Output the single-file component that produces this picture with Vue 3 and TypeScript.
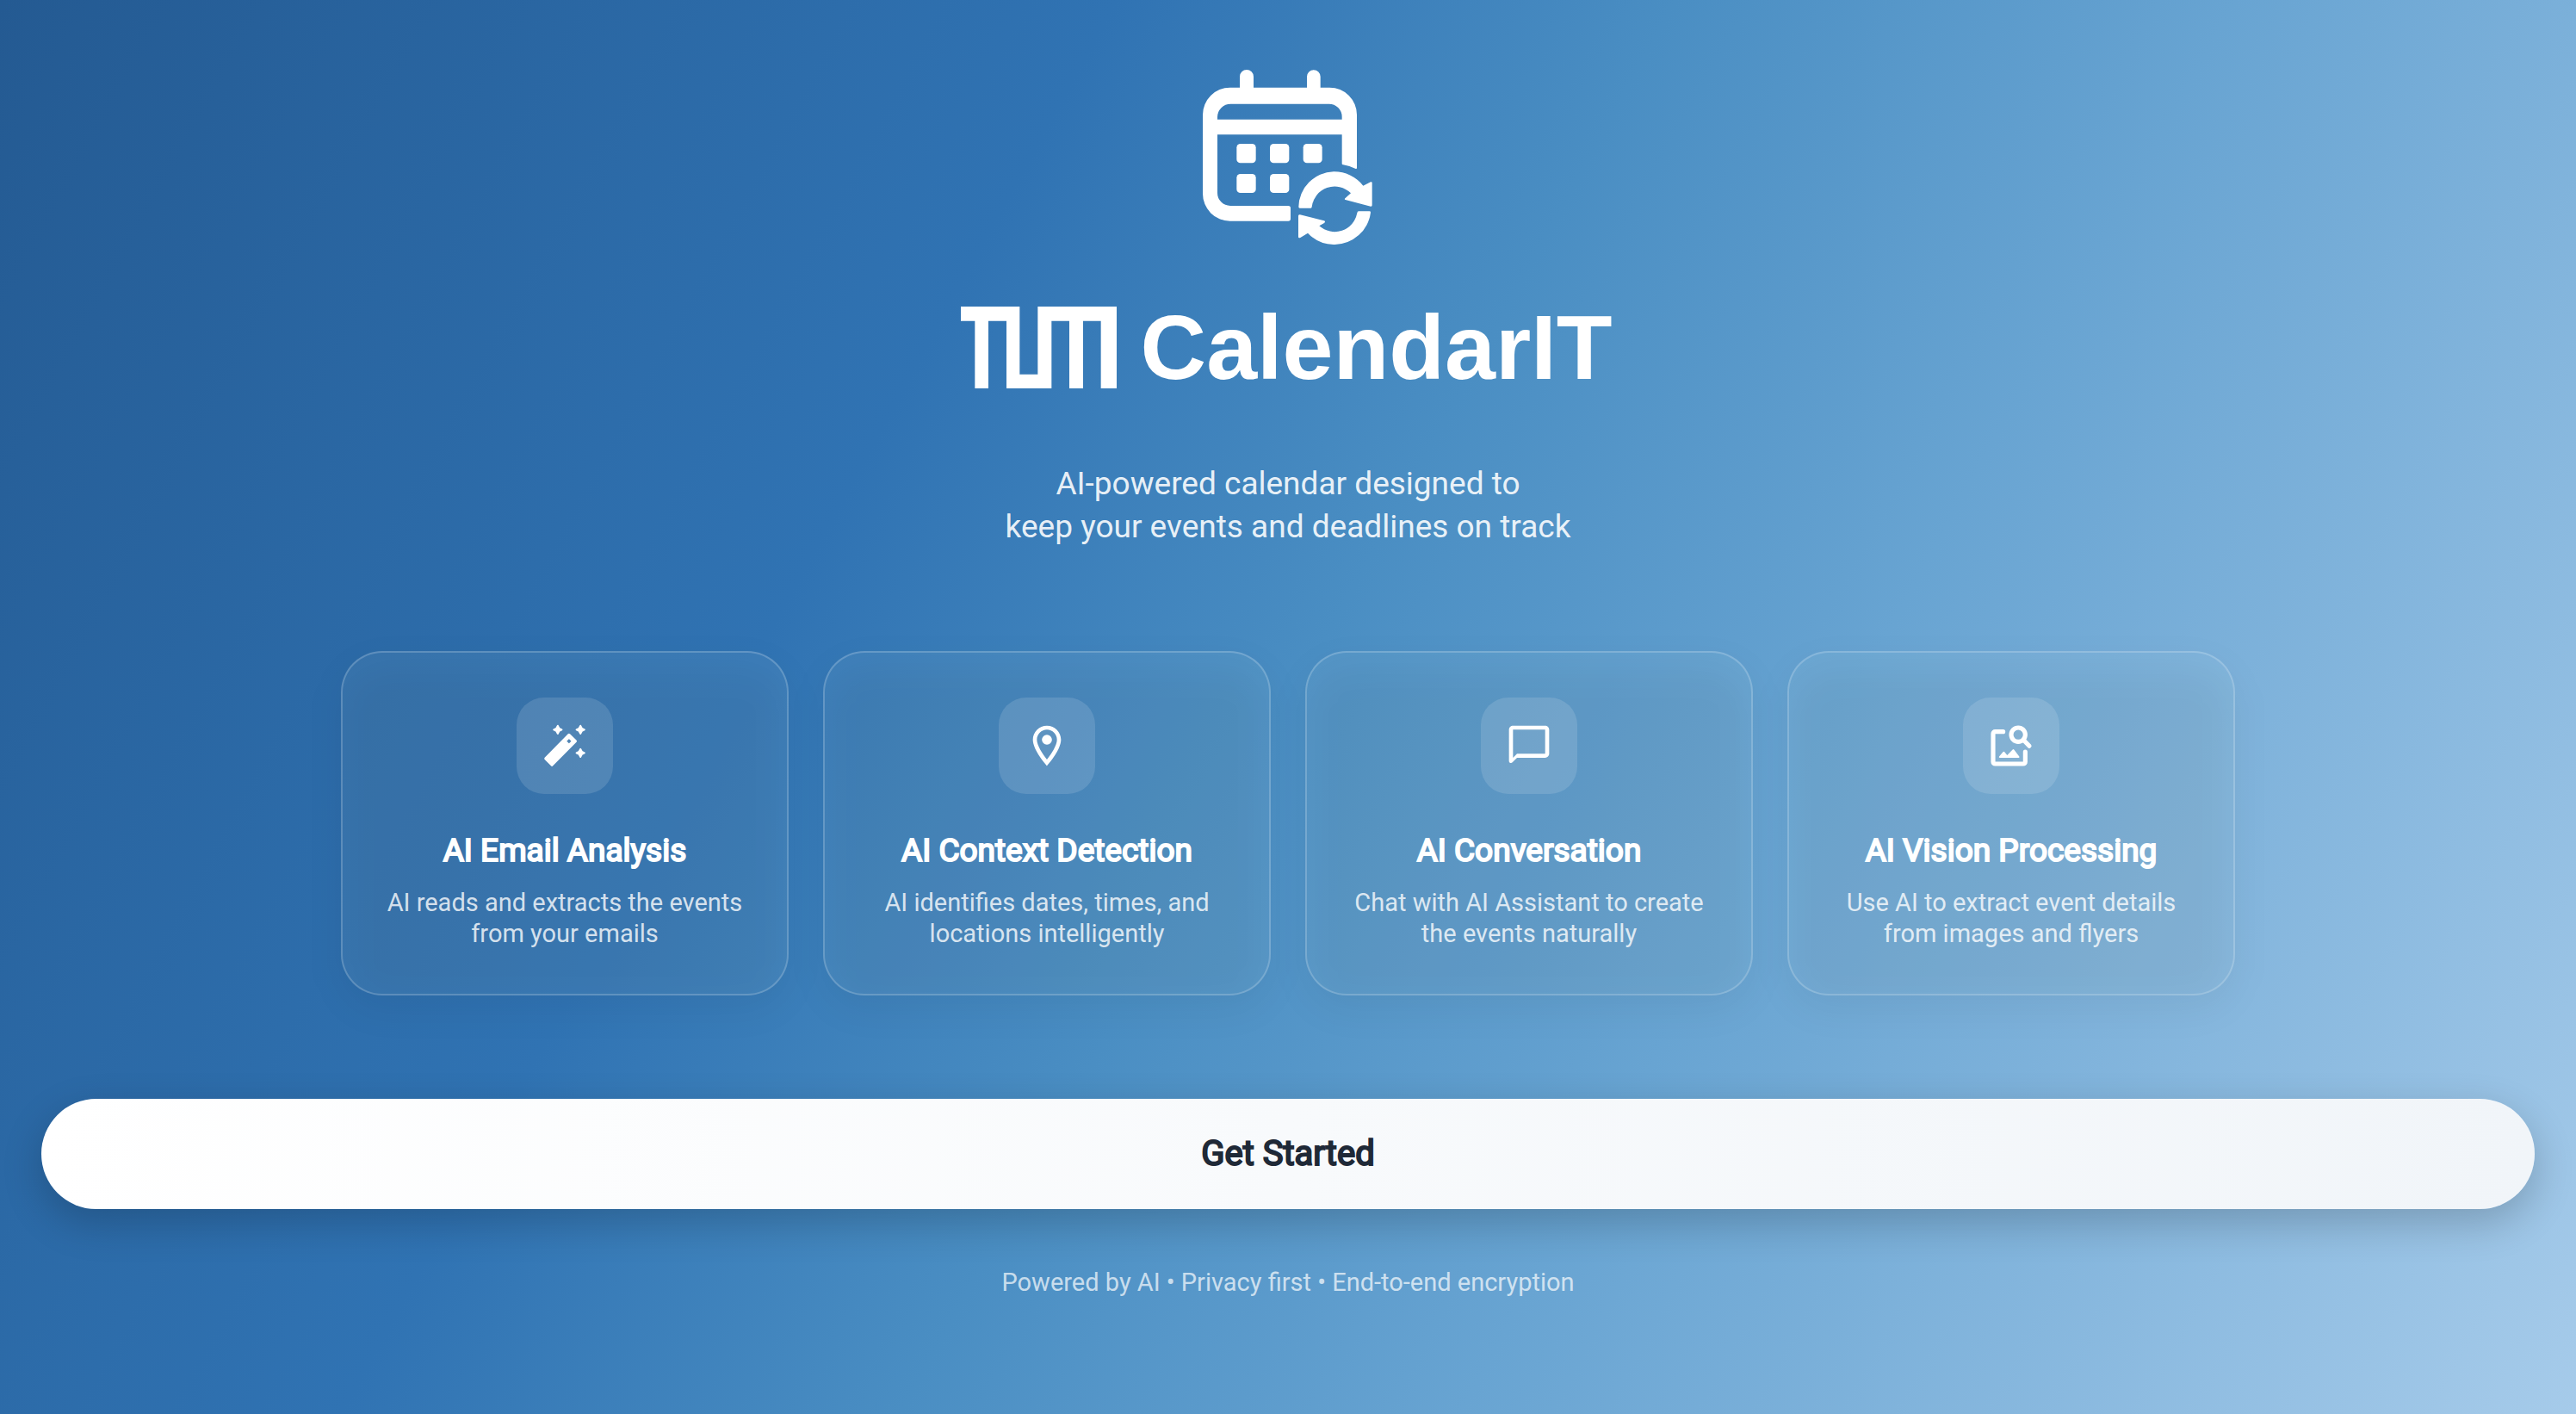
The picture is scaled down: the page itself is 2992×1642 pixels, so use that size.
<script setup lang="ts">
type IconName = 'wand' | 'pin' | 'chat' | 'imageSearch'

interface Feature {
  icon: IconName
  title: string
  lines: [string, string]
}

const features: Feature[] = [
  { icon: 'wand', title: 'AI Email Analysis', lines: ['AI reads and extracts the events', 'from your emails'] },
  { icon: 'pin', title: 'AI Context Detection', lines: ['AI identifies dates, times, and', 'locations intelligently'] },
  { icon: 'chat', title: 'AI Conversation', lines: ['Chat with AI Assistant to create', 'the events naturally'] },
  { icon: 'imageSearch', title: 'AI Vision Processing', lines: ['Use AI to extract event details', 'from images and flyers'] },
]
</script>

<template>
  <main class="page">
    <svg class="calendar" viewBox="78 60 600 612" aria-hidden="true">
      <path d="M210 130V87a24 24 0 0 1 48 0v43zM444 130V87a23.500 23.500 0 0 1 47 0v43z" />
      <path
        fill-rule="evenodd"
        d="M566 289H132V492a45 45 0 0 0 45 45H379q8 0 8 8V582q0 8-8 8H176A95 95 0 0 1 81 495V220A95 95 0 0 1 176 125H523A95 95 0 0 1 618 220V405q0 4-4 3Q592 398 570 394q-4 0-4-4ZM132 236H566V227a45 45 0 0 0-45-45H178a46 46 0 0 0-46 46Z"
      />
      <rect x="199" y="321" width="67" height="67" rx="13" />
      <rect x="315" y="321" width="67" height="67" rx="13" />
      <rect x="431" y="321" width="66" height="67" rx="13" />
      <rect x="199" y="426" width="67" height="66" rx="13" />
      <rect x="315" y="426" width="67" height="66" rx="13" />
      <path d="M419 545Q415 545 415 541A126 124 0 0 1 537 418A128 128 0 0 1 640 467L666 454q5-2 5 3V535q0 5-5 4L578 516q-5-2 0-6L597 493A80 80 0 0 0 461 541q0 4-4 4Z" />
      <path d="M624 556H662q4 0 4 4A128 128 0 0 1 541 672A126 126 0 0 1 447 632L421 648q-7 3-7-3V572q0-6 6-4L504 589q6 3 0 8L487 607A80 80 0 0 0 619 562q1-6 5-6Z" />
    </svg>

    <h1 class="brand">
      <svg class="tum" viewBox="0 0 543 285" role="img" aria-label="TUM">
        <path d="M0 0H205V236H268V0H543V285H488V50H426V285H378V50H316V285H159V50H96V285H49V50H0Z" />
      </svg>
      <span>CalendarIT</span>
    </h1>

    <p class="tagline">AI-powered calendar designed to<br />keep your events and deadlines on track</p>

    <section class="features">
      <article v-for="f in features" :key="f.title" class="card">
        <div class="badge">
          <svg viewBox="0 0 24 24" aria-hidden="true">
            <template v-if="f.icon === 'wand'">
              <path
                fill-rule="evenodd"
                stroke="#fff"
                stroke-width="1.4"
                stroke-linejoin="round"
                d="M14.100 6.600L17.300 9.700L5.600 21.500L2.500 18.400ZM14.100 7.600L12 9.700L14.100 11.800L16.200 9.700Z"
              />
              <path
                stroke="#fff"
                stroke-width=".8"
                stroke-linejoin="round"
                d="M8.500 2l.7 1.300 1.300.7-1.300.7-.7 1.300-.7-1.300-1.300-.7 1.300-.7zM19.800 2l.7 1.300 1.300.7-1.300.7-.7 1.300-.7-1.300-1.300-.7 1.300-.7zM19.800 13.600l.7 1.300 1.300.7-1.300.7-.7 1.300-.7-1.300-1.300-.7 1.300-.7z"
              />
            </template>
            <template v-else-if="f.icon === 'pin'">
              <path d="M12 2C8.130 2 5 5.130 5 9c0 5.250 7 13 7 13s7-7.750 7-13c0-3.870-3.130-7-7-7zM7 9c0-2.760 2.240-5 5-5s5 2.240 5 5c0 2.880-2.880 7.190-5 9.880C9.920 16.210 7 11.850 7 9z" />
              <circle cx="12" cy="9" r="2.5" />
            </template>
            <path
              v-else-if="f.icon === 'chat'"
              d="M20 2H4c-1.100 0-2 .9-2 2v15.590c0 .89 1.080 1.330 1.710.71L6 18h14c1.100 0 2-.9 2-2V4c0-1.100-.9-2-2-2zm0 14H6l-2 2V4h16v12z"
            />
            <template v-else>
              <g fill="none" stroke="#fff" stroke-width="2.200" stroke-linecap="round">
                <path d="M8 5H4a1 1 0 0 0-1 1V20a1 1 0 0 0 1 1H18a1 1 0 0 0 1-1V15" />
                <circle cx="15.500" cy="6.500" r="3.500" />
                <path d="M18 9l3 3.100" />
              </g>
              <path d="M6.300 18a.4.4 0 0 1-.3-.6L8 15q.3-.3.6 0L10 16.700 12.700 13.900q.4-.4.700 0L16 17.400q.3.500-.3.600z" />
            </template>
          </svg>
        </div>
        <h2>{{ f.title }}</h2>
        <p>{{ f.lines[0] }}<br />{{ f.lines[1] }}</p>
      </article>
    </section>

    <button type="button" class="start">Get Started</button>

    <footer>Powered by AI • Privacy first • End-to-end encryption</footer>
  </main>
</template>

<style>
body {
  margin: 0;
}
</style>

<style scoped>
.page {
  box-sizing: border-box;
  min-height: 100vh;
  padding: 80px 48px;
  display: flex;
  flex-direction: column;
  align-items: center;
  font-family: Roboto, sans-serif;
  color: #fff;
  text-align: center;
  background: linear-gradient(118.76deg, #245a92 0%, #3073b3 33.3%, #4a8ec3 50%, #68a4d2 66.7%, #a6cbea 100%);
}

svg {
  display: block;
  fill: #fff;
}

h1,
h2,
p {
  margin: 0;
}

.calendar {
  width: 200px;
  height: 204px;
}

.brand {
  margin-top: 72px;
  height: 96px;
  padding-right: 4px;
  display: flex;
  gap: 28px;
  font: 700 106px/94px "Liberation Sans", Arial, sans-serif;
}

.tum {
  width: 181px;
  height: 95px;
}

.tagline {
  margin-top: 85px;
  font-size: 37px;
  line-height: 50px;
  color: rgba(255, 255, 255, 0.9);
}

.features {
  width: 100%;
  max-width: 2200px;
  margin-top: 119px;
  display: grid;
  grid-template-columns: repeat(4, 1fr);
  gap: 40px;
}

.card {
  position: relative;
  isolation: isolate;
  padding: 52px 24px;
  display: flex;
  flex-direction: column;
  align-items: center;
  border: 2px solid rgba(255, 255, 255, 0.2);
  border-radius: 48px;
  background: rgba(205, 245, 255, 0.08);
}

/* Soft shadow that also shows through the translucent card */
.card::before {
  content: "";
  position: absolute;
  inset: 16px 0 -16px;
  z-index: -1;
  border-radius: 48px;
  background: rgba(0, 0, 0, 0.05);
  filter: blur(22px);
}

.badge {
  width: 112px;
  height: 112px;
  display: grid;
  place-items: center;
  border-radius: 32px;
  background: rgba(255, 255, 255, 0.13);
}

.badge svg {
  width: 56px;
  height: 56px;
}

.card h2 {
  margin-top: 41px;
  font-size: 37px;
  font-weight: 400;
  line-height: 50px;
  -webkit-text-stroke: 2px currentColor;
}

.card p {
  margin-top: 17px;
  font-size: 29px;
  line-height: 36px;
  color: rgba(255, 255, 255, 0.8);
}

.start {
  width: 100%;
  height: 128px;
  margin-top: 120px;
  padding: 0;
  border: 0;
  border-radius: 64px;
  background: linear-gradient(90deg, #fff, #f1f5f9);
  box-shadow: 0 16px 48px rgba(0, 0, 0, 0.2);
  font: 400 40px/48px Roboto, sans-serif;
  color: #1f2937;
  -webkit-text-stroke: 2px currentColor;
}

footer {
  margin-top: 67px;
  font-size: 29px;
  line-height: 36px;
  color: rgba(255, 255, 255, 0.7);
}
</style>
